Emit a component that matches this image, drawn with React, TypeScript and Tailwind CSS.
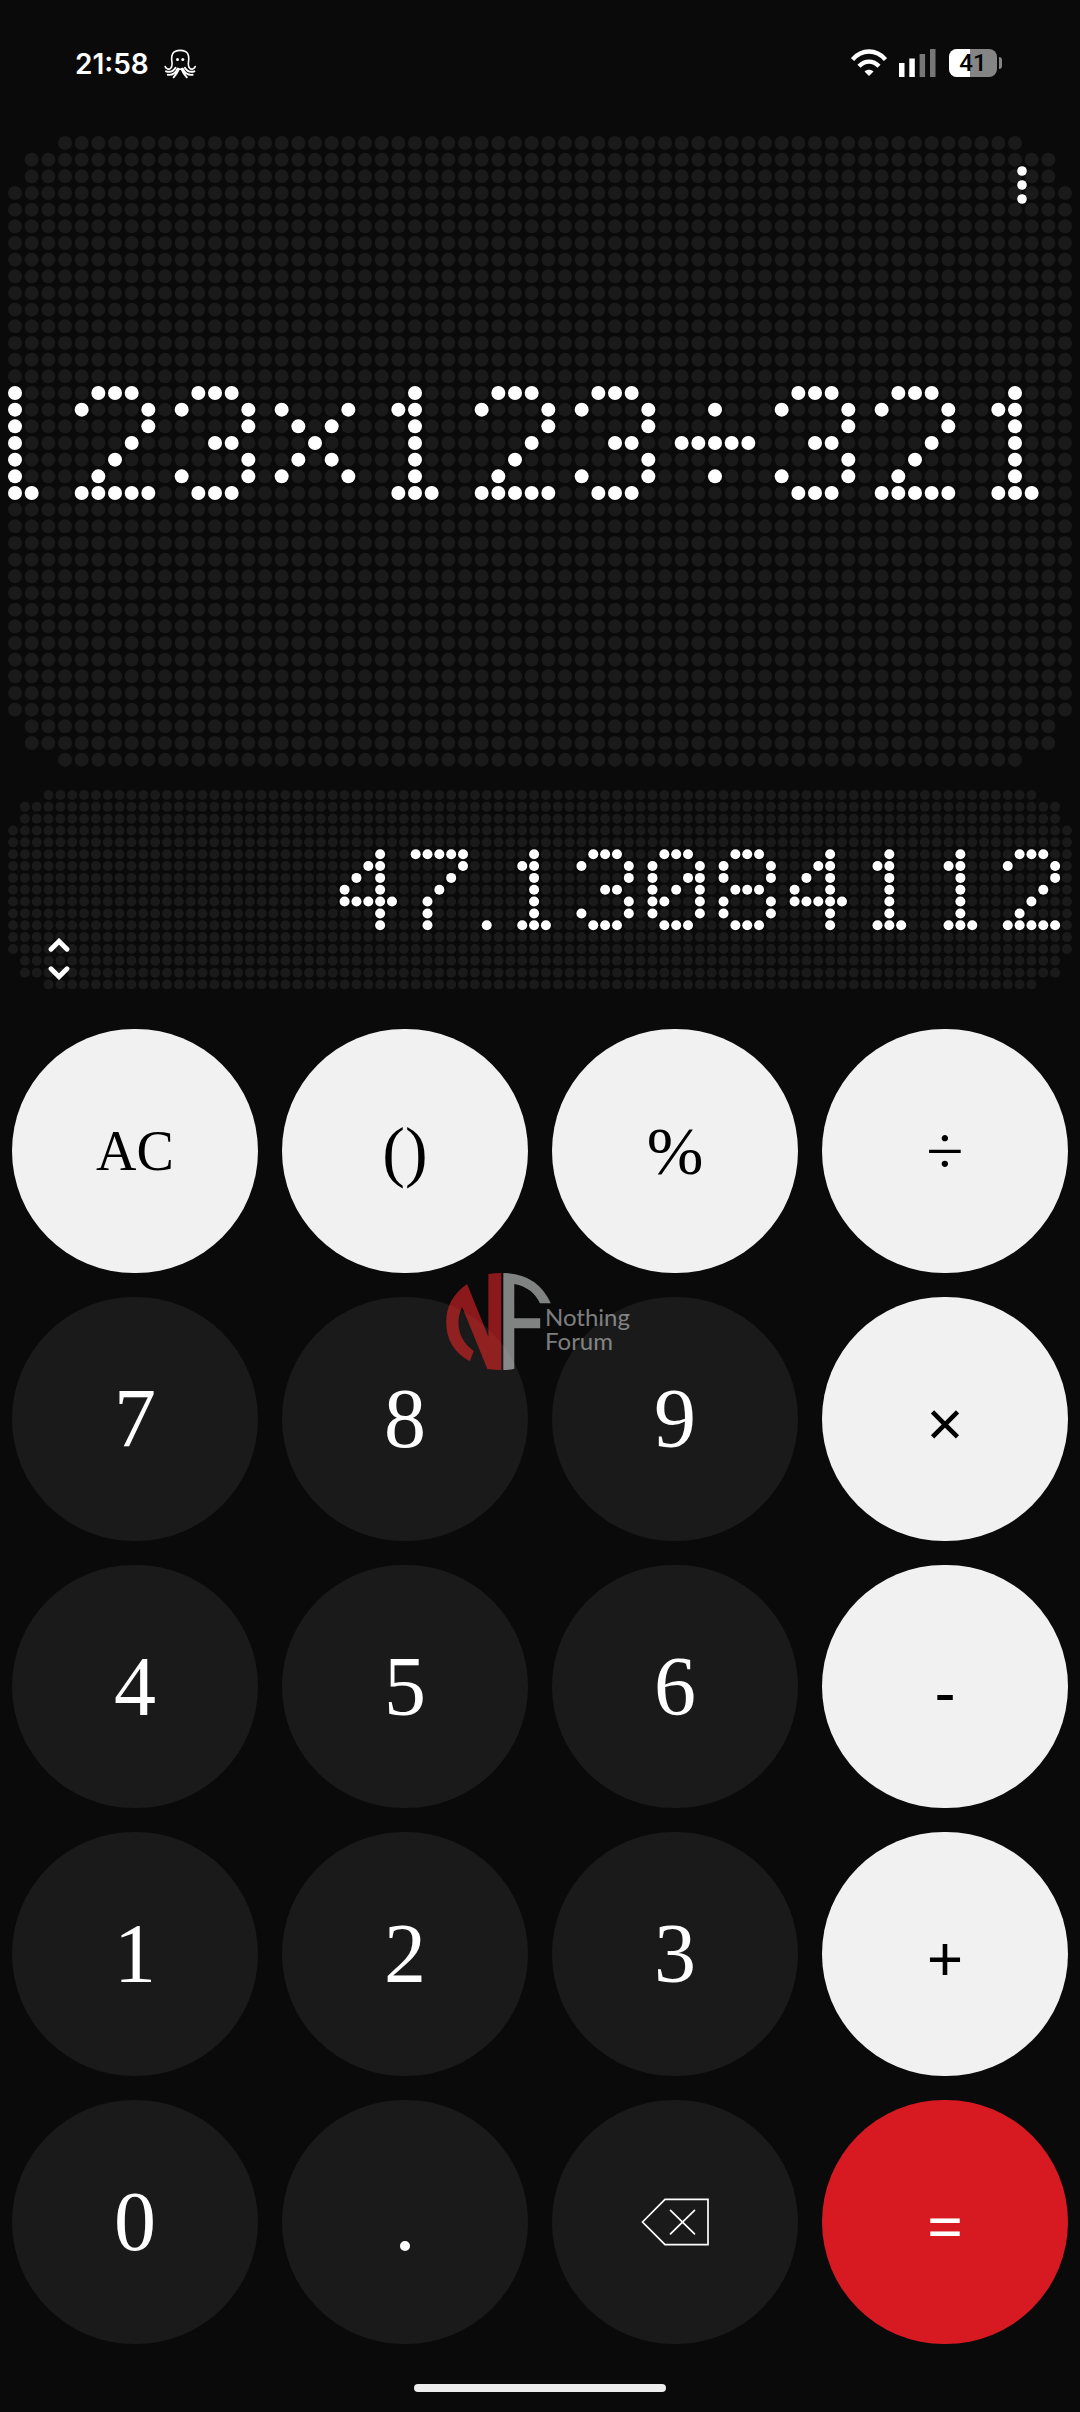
import React from 'react';

const GLYPHS: Record<string, string[]> = {
  '0': ['.###.', '#...#', '#..##', '#.#.#', '##..#', '#...#', '.###.'],
  '1': ['..#..', '.##..', '..#..', '..#..', '..#..', '..#..', '.###.'],
  '2': ['.###.', '#...#', '....#', '...#.', '..#..', '.#...', '#####'],
  '3': ['.###.', '#...#', '....#', '..##.', '....#', '#...#', '.###.'],
  '4': ['...#.', '..##.', '.#.#.', '#..#.', '#####', '...#.', '...#.'],
  '7': ['#####', '....#', '...#.', '..#..', '.#...', '.#...', '.#...'],
  '8': ['.###.', '#...#', '#...#', '.###.', '#...#', '#...#', '.###.'],
  '.': ['.', '.', '.', '.', '.', '.', '#'],
  '×': ['.....', '#...#', '.#.#.', '..#..', '.#.#.', '#...#', '.....'],
  '÷': ['.....', '..#..', '.....', '#####', '.....', '..#..', '.....'],
};

// dots left out at each end of the outermost rows
const CORNER = [3, 1, 1];

interface DotMatrixProps {
  value: string;
  cols: number;
  rows: number;
  firstRow: number;
  radius: number;
}

const DotMatrix: React.FC<DotMatrixProps> = ({ value, cols, rows, firstRow, radius }) => {
  const width = 1064;
  const pitch = (width - radius * 2) / (cols - 1);
  const height = pitch * (rows - 1) + radius * 2;

  // right aligned, one empty column at the end
  const lit = new Set<string>();
  let right = cols - 1;
  for (const char of [...value].reverse()) {
    const glyph = GLYPHS[char];
    const left = right - glyph[0].length;
    glyph.forEach((line, y) => {
      [...line].forEach((dot, x) => {
        if (dot === '#') lit.add(`${left + x},${firstRow + y}`);
      });
    });
    right = left - 1;
  }

  const dots = [];
  for (let row = 0; row < rows; row++) {
    const skip = CORNER[Math.min(row, rows - 1 - row)] ?? 0;
    for (let col = skip; col < cols - skip; col++) {
      dots.push(
        <circle
          key={`${col},${row}`}
          cx={radius + col * pitch}
          cy={radius + row * pitch}
          r={radius}
          className={lit.has(`${col},${row}`) ? 'fill-white' : 'fill-[#1a1a1a]'}
        />
      );
    }
  }

  return (
    <svg viewBox={`0 0 ${width} ${height}`} className="block w-full" role="img" aria-label={value}>
      {dots}
    </svg>
  );
};

const OctopusIcon = () => (
  <svg viewBox="0 0 32 30" className="h-[30px] w-8" fill="none" stroke="white" strokeWidth="1.6" strokeLinecap="round" aria-hidden="true">
    <path d="M1.2 17.6c1 2.6 3.8 3.2 5.4 1.8 1.8-1.6 1.7-3.8 1.3-6.6-.5-3.6-.3-6.2.8-8.2C10.1 2.4 12.7 1.4 16.2 1.4s6.1 1 7.5 3.2c1.1 2 1.3 4.6.8 8.2-.4 2.8-.5 5 1.3 6.6 1.6 1.4 4.4.8 5.4-1.8" />
    <path d="M2 22.3c4 1.300 7.500-.3 9.500-3.600M3.800 25.800c4.700.6 8-2 10-6.300M9.600 28.300c2.400-2.400 4-5.300 5.300-8.300" strokeWidth="1.9" />
    <path d="M30.4 22.300c-4 1.300-7.500-.3-9.500-3.600M28.600 25.800c-4.700.6-8-2-10-6.300M22.800 28.300c-2.400-2.400-4-5.300-5.300-8.300" strokeWidth="1.9" />
    <path d="M14 20.200h4.400" />
    <circle cx="13.5" cy="10.5" r="1.5" fill="white" stroke="none" />
    <circle cx="18.8" cy="10.5" r="1.5" fill="white" stroke="none" />
  </svg>
);

const WifiIcon = () => (
  <svg viewBox="0 0 36 28" className="h-7 w-9" fill="none" stroke="white" strokeWidth="4.4" aria-label="Wi-Fi">
    <path d="M1.500 10.500C11-.1 25-.1 34.500 10.500" />
    <path d="M8 17.300c6-6.200 14-6.200 20 0" />
    <path d="M18 27l-4.500-4.600c2.600-2.200 6.400-2.200 9 0z" fill="white" stroke="none" />
  </svg>
);

const SignalIcon = () => (
  <svg viewBox="0 0 38 28" className="h-7 w-[38px]" fill="white" aria-label="Signal">
    <rect x="0" y="14" width="5.5" height="14" />
    <rect x="10.3" y="9.5" width="5.5" height="18.5" />
    <rect x="20.6" y="5" width="5.5" height="23" fill="#777777" />
    <rect x="31" y="0" width="5.5" height="28" fill="#777777" />
  </svg>
);

const Battery: React.FC<{ level: number }> = ({ level }) => (
  <div className="flex items-center gap-0.5">
    <div className="relative flex h-7 w-12 items-center justify-center overflow-hidden rounded-lg bg-[#858585]">
      <div className="absolute inset-y-0 left-0 bg-white" style={{ width: `${level + 3}%` }} />
      <span className="relative font-['Roboto',sans-serif] text-2xl font-medium leading-7 text-black">{level}</span>
    </div>
    <div className="h-3 w-[3px] rounded-r-sm bg-[#858585]" />
  </div>
);

const StatusBar = () => (
  <header className="flex h-[136px] items-start justify-between pl-[75px] pr-[78px] pt-[49px] text-white">
    <div className="flex items-center gap-[15px]">
      <time className="font-['Inter',sans-serif] text-[28px] font-semibold leading-7">21:58</time>
      <OctopusIcon />
    </div>
    <div className="flex items-center gap-3">
      <WifiIcon />
      <SignalIcon />
      <Battery level={41} />
    </div>
  </header>
);

const BackspaceIcon = () => (
  <svg viewBox="0 0 68 48" className="h-12 w-[68px]" fill="none" stroke="white" strokeWidth="1.7" aria-hidden="true">
    <path d="M1.500 24L24 1.300h43v45.400H24z" />
    <path d="M29.500 12.300l24 23.500M53.500 12.300l-24 23.500" strokeLinecap="round" />
  </svg>
);

const Watermark = () => (
  <div className="pointer-events-none absolute left-[446px] top-[244px] flex items-start opacity-60">
    <svg viewBox="137 98 315 292" className="h-[97px] w-[105px]" aria-hidden="true">
      <path
        d="M264 101Q283 98 303 98V390Q282 390 261 387L185 200Q174 222 174 248Q174 300 220 333L208 364Q137 325 137 245Q137 175 200 131L264 290Z"
        fill="#e12427"
      />
      <path d="M309 98Q410 98 452 189H419Q398 142 342 131V234H420V264H342V386Q325 390 309 390Z" fill="#d0d2d3" />
    </svg>
    <div className="-ml-1.5 mt-8 font-['Lato',sans-serif] text-2xl leading-6 text-[#c8cacb]">
      <p>Nothing</p>
      <p>Forum</p>
    </div>
  </div>
);

type Tone = 'clear' | 'light' | 'operator' | 'dark' | 'accent';

interface KeyDef {
  label: string;
  tone: Tone;
  name?: string;
  icon?: React.ReactNode;
}

const KEYS: KeyDef[] = [
  { label: 'AC', tone: 'clear', name: 'All clear' },
  { label: '()', tone: 'light', name: 'Parentheses' },
  { label: '%', tone: 'light', name: 'Percent' },
  { label: '÷', tone: 'light', name: 'Divide' },
  { label: '7', tone: 'dark' },
  { label: '8', tone: 'dark' },
  { label: '9', tone: 'dark' },
  { label: '×', tone: 'operator', name: 'Multiply' },
  { label: '4', tone: 'dark' },
  { label: '5', tone: 'dark' },
  { label: '6', tone: 'dark' },
  { label: '-', tone: 'operator', name: 'Subtract' },
  { label: '1', tone: 'dark' },
  { label: '2', tone: 'dark' },
  { label: '3', tone: 'dark' },
  { label: '+', tone: 'operator', name: 'Add' },
  { label: '0', tone: 'dark' },
  { label: '.', tone: 'dark', name: 'Decimal point' },
  { label: '', tone: 'dark', name: 'Backspace', icon: <BackspaceIcon /> },
  { label: '=', tone: 'accent', name: 'Equals' },
];

const TONES: Record<Tone, string> = {
  clear: "bg-[#f1f1f1] text-black text-[56px] font-['Liberation_Serif',serif]",
  light: "bg-[#f1f1f1] text-black text-[68px] font-['Liberation_Serif',serif]",
  operator: "bg-[#f1f1f1] text-black pt-2 text-[64px] font-['Noto_Sans',sans-serif]",
  dark: "bg-[#1a1a1a] text-white text-[84px] font-['Liberation_Serif',serif]",
  accent: "bg-[#d71a21] text-white pt-2 text-[64px] font-['Noto_Sans',sans-serif]",
};

const Key: React.FC<{ keyDef: KeyDef }> = ({ keyDef }) => (
  <button
    type="button"
    aria-label={keyDef.name}
    className={`flex items-center justify-center rounded-full leading-none ${TONES[keyDef.tone]}`}
  >
    {keyDef.icon ?? keyDef.label}
  </button>
);

const App: React.FC = () => {
  return (
    <div className="flex min-h-screen flex-col bg-[#0a0a0a]">
      <StatusBar />
      <main className="flex flex-1 flex-col">
        <section className="relative px-2">
          <DotMatrix value="123×123÷321" cols={64} rows={38} firstRow={15} radius={7} />
          <button type="button" aria-label="Menu" className="absolute right-9 top-6 flex h-[50px] w-11 items-center justify-center">
            <svg viewBox="0 0 10 38" className="h-[38px] w-2.5" fill="white" aria-hidden="true">
              <circle cx="5" cy="5" r="4.8" />
              <circle cx="5" cy="19" r="4.8" />
              <circle cx="5" cy="33" r="4.8" />
            </svg>
          </button>
        </section>
        <section className="relative mt-[23px] px-2">
          <DotMatrix value="47.13084112" cols={90} rows={17} firstRow={5} radius={5} />
          <button type="button" aria-label="Expand history" className="absolute bottom-1.5 left-[35px] flex h-12 w-12 items-center justify-center">
            <svg viewBox="0 0 22 42" className="h-[42px] w-[22px]" fill="none" stroke="white" strokeWidth="4.8" strokeLinecap="round" aria-hidden="true">
              <path d="M3 11.300L11 3.300l8 8M3 30.700l8 8 8-8" />
            </svg>
          </button>
        </section>
        <section className="relative mt-10 grid flex-1 auto-rows-fr grid-cols-4 gap-6 px-3">
          {KEYS.map((keyDef, i) => (
            <Key key={i} keyDef={keyDef} />
          ))}
          <Watermark />
        </section>
      </main>
      <footer className="flex justify-center pb-5 pt-10">
        <div className="h-2 w-[252px] rounded-full bg-[#ededed]" />
      </footer>
    </div>
  );
};

export default App;
